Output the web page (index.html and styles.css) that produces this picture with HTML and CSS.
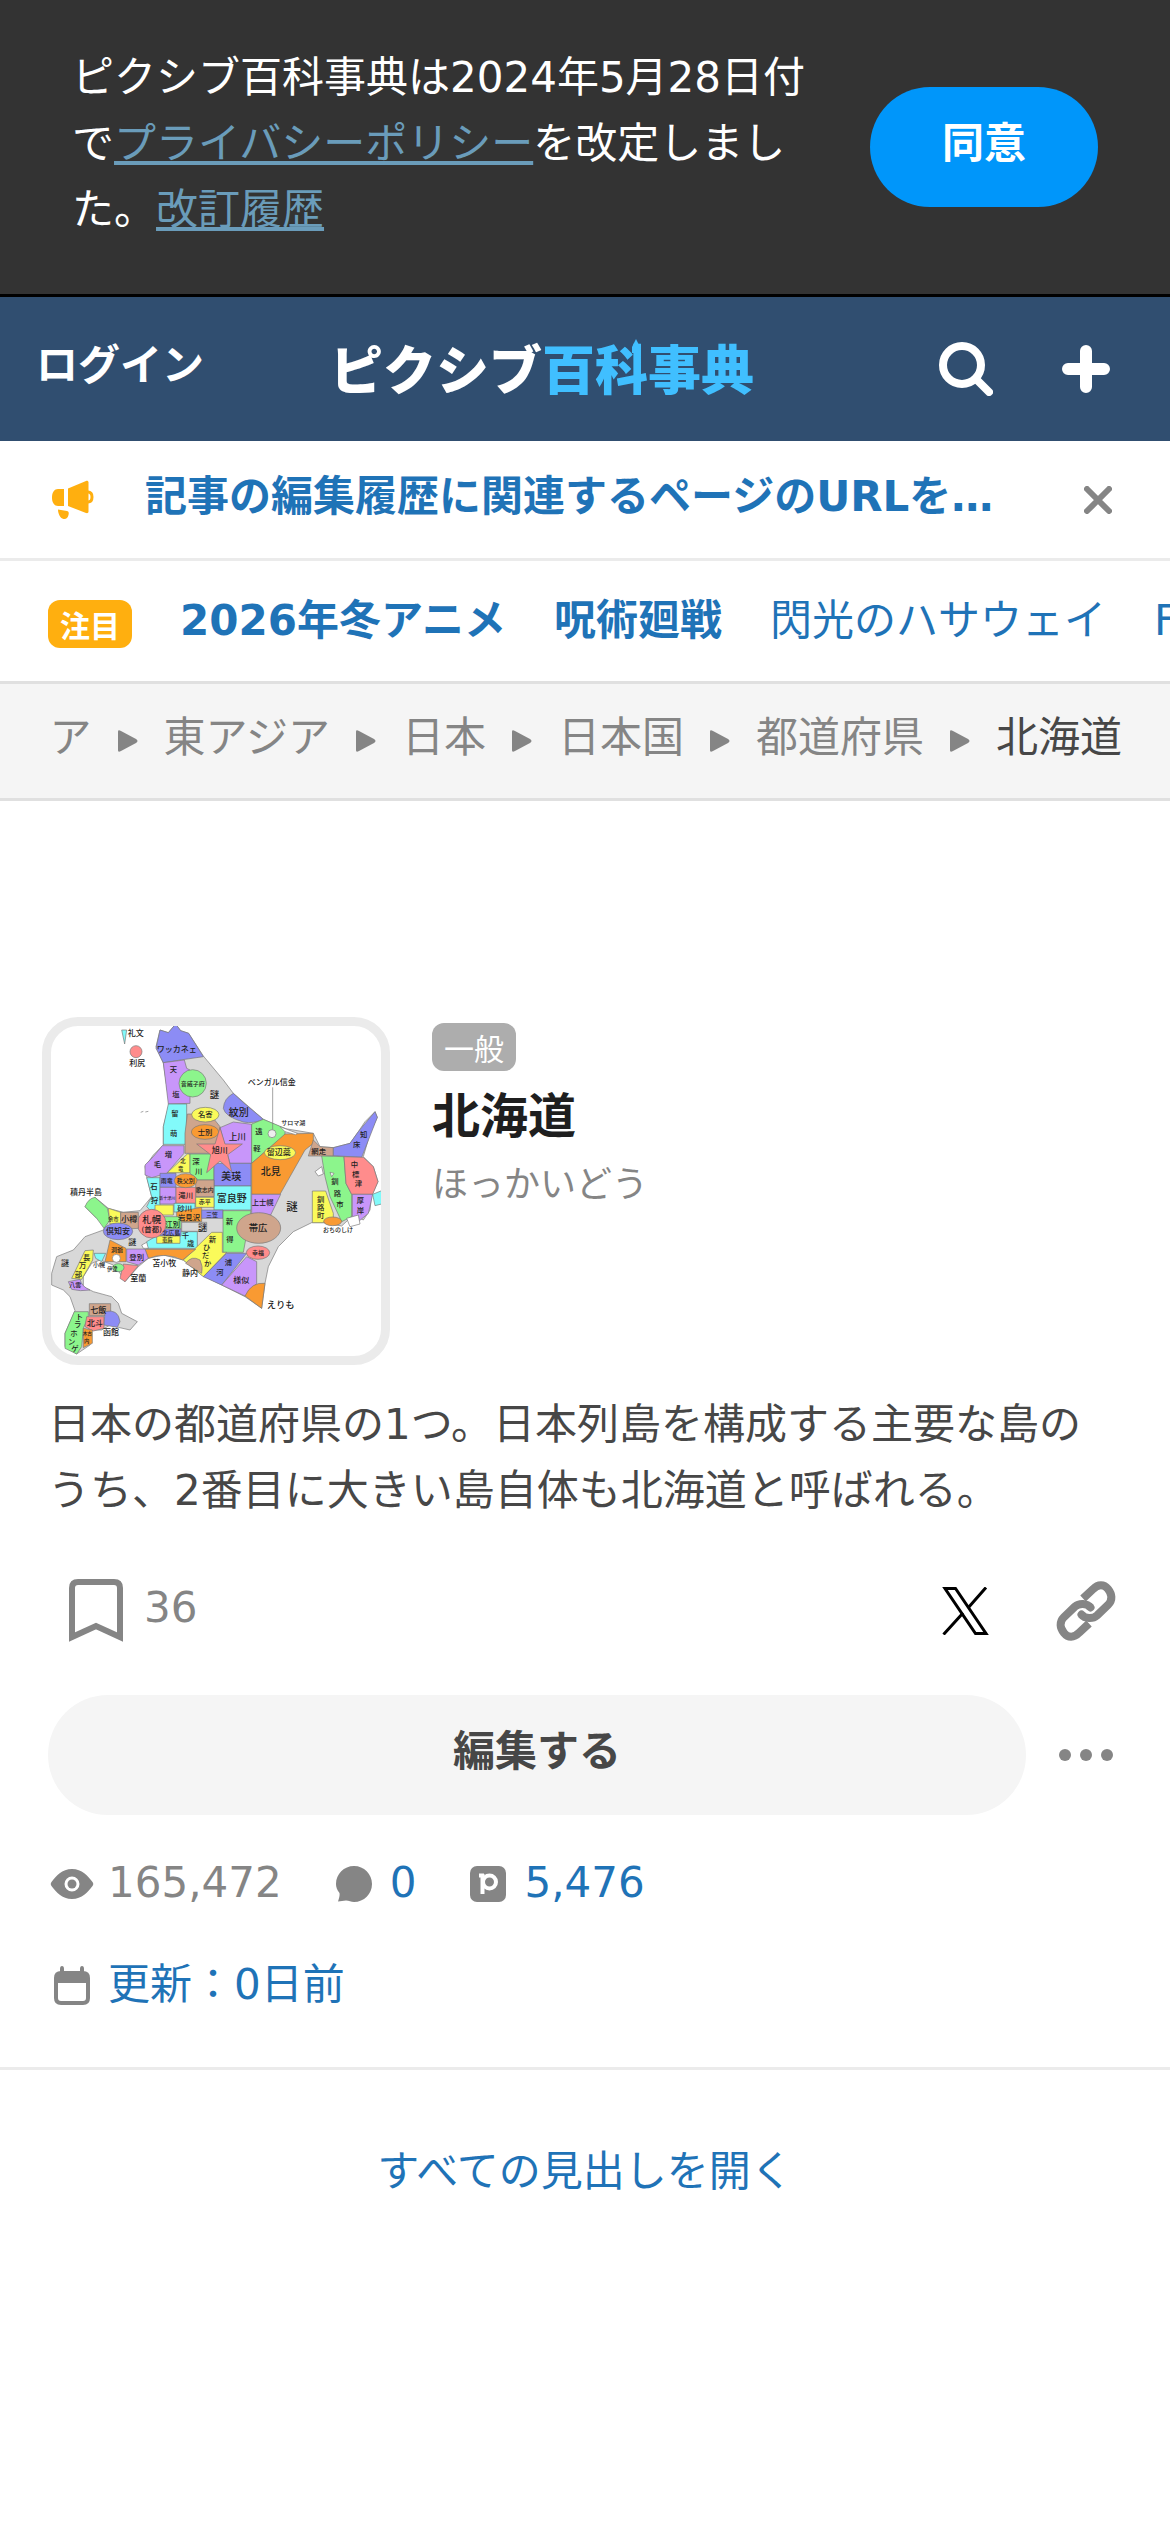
FILE: index.html
```
<!DOCTYPE html>
<html lang="ja">
<head>
    <meta charset="UTF-8">
    <meta name="viewport" content="width=device-width, initial-scale=1.0">
    <title>北海道 - ピクシブ百科事典</title>
    <link rel="stylesheet" href="styles.css">
</head>
<body>
    <!-- お知らせバナー -->
    <div class="policy">
        <p class="policy-text">ピクシブ百科事典は2024年5月28日付で<a href="#">プライバシーポリシー</a>を改定しました。<a href="#">改訂履歴</a></p>
        <button class="policy-agree" type="button">同意</button>
    </div>

    <!-- ヘッダー -->
    <header class="header">
        <a class="login" href="#">ログイン</a>
        <a class="logo" href="#">
            <span>ピクシブ</span><span class="logo-sub">百科事典</span>
            <svg class="logo-pencil" width="8" height="14" viewBox="0 0 8 14" fill="#40bfff"><path d="M4 0l4 8v6H0V8z"/></svg>
        </a>
        <div class="header-buttons">
            <button class="icon-button" type="button" aria-label="検索">
                <svg width="54" height="54" viewBox="0 0 54 54" fill="none" stroke="#fff" stroke-linecap="round">
                    <circle cx="23" cy="23" r="19" stroke-width="8"/>
                    <path d="M37 37l13 13" stroke-width="8"/>
                </svg>
            </button>
            <button class="icon-button" type="button" aria-label="記事を作成">
                <svg width="48" height="48" viewBox="0 0 48 48" stroke="#fff" stroke-width="12" stroke-linecap="round">
                    <path d="M24 6v36M6 24h36"/>
                </svg>
            </button>
        </div>
    </header>

    <!-- 運営からのお知らせ -->
    <div class="notice">
        <svg class="notice-icon" width="42" height="40" viewBox="0 0 42 40" fill="#ffaf0f">
            <path d="M12 9v17H6c-3.500 0-6-3-6-8.500S2.500 9 6 9z"/>
            <path d="M16 8.500L34 1c1.300-.5 2.500.2 2.500 1.500v29c0 1.300-1.200 2-2.500 1.500l-18-7z"/>
            <path d="M36 12c2.500 0 4 2 4 5s-1.500 5-4 5" fill="none" stroke="#ffaf0f" stroke-width="3"/>
            <path d="M6 29.500l9 1.500c2 .4 2 2 1.500 4-.7 3-2.500 4.500-5 4-3-.6-5.500-5-5.500-9.500z"/>
        </svg>
        <a class="notice-link" href="#">記事の編集履歴に関連するページのURLを…</a>
        <button class="icon-button" type="button" aria-label="閉じる">
            <svg width="28" height="28" viewBox="0 0 28 28" stroke="#858585" stroke-width="6" stroke-linecap="round">
                <path d="M3 3l22 22M25 3L3 25"/>
            </svg>
        </button>
    </div>

    <!-- 注目タグ -->
    <div class="pickup">
        <span class="label label-pickup">注目</span>
        <a class="strong" href="#">2026年冬アニメ</a>
        <a class="strong" href="#">呪術廻戦</a>
        <a href="#">閃光のハサウェイ</a>
        <a href="#">Fate</a>
    </div>

    <!-- パンくず -->
    <nav class="breadcrumb">
        <a href="#">ア</a>
        <svg class="arrow" viewBox="0 0 20 22"><path d="M0 2C0 0 1 0 3 1l15 8c2 1 2 3 0 4L3 21c-2 1-3 1-3-1z"/></svg>
        <a href="#">東アジア</a>
        <svg class="arrow" viewBox="0 0 20 22"><path d="M0 2C0 0 1 0 3 1l15 8c2 1 2 3 0 4L3 21c-2 1-3 1-3-1z"/></svg>
        <a href="#">日本</a>
        <svg class="arrow" viewBox="0 0 20 22"><path d="M0 2C0 0 1 0 3 1l15 8c2 1 2 3 0 4L3 21c-2 1-3 1-3-1z"/></svg>
        <a href="#">日本国</a>
        <svg class="arrow" viewBox="0 0 20 22"><path d="M0 2C0 0 1 0 3 1l15 8c2 1 2 3 0 4L3 21c-2 1-3 1-3-1z"/></svg>
        <a href="#">都道府県</a>
        <svg class="arrow" viewBox="0 0 20 22"><path d="M0 2C0 0 1 0 3 1l15 8c2 1 2 3 0 4L3 21c-2 1-3 1-3-1z"/></svg>
        <span class="current">北海道</span>
    </nav>

    <!-- 記事 -->
    <main class="article">
        <div class="article-head">
            <svg class="map" viewBox="63 78 990 990" role="img" aria-label="北海道の地図">
                <g stroke="#777" stroke-width="2">
                    <!-- 本島 -->
                    <path fill="#d8d8d8" d="M437 72L452 92 476 100 520 168 580 240 610 280 700 358 760 385 850 400 870 440 910 443 960 430 985 395 1005 365 1035 335 1042 352 1020 400 1000 470 1030 500 1044 545 1025 585 1020 630 1000 660 970 645 935 678 880 668 845 668 790 695 745 740 715 800 705 850 695 925 645 890 575 855 515 825 460 780 400 765 355 775 325 800 285 845 270 820 250 795 210 780 185 790 160 830 160 860 190 875 245 890 265 910 275 940 322 965 300 990 265 982 240 975 215 990 185 990 180 1035 140 1062 105 1040 105 1000 135 932 120 890 100 870 65 855 65 820 80 770 130 750 165 710 220 690 235 660 200 655 165 620 195 592 235 625 280 637 330 632 365 590 350 530 345 500 370 465 400 435 400 380 418 310 400 190 378 140 390 90 415 98z"/>
                    <!-- 北部 -->
                    <path fill="#8c8cf5" d="M437 72L452 92 476 100 520 170 465 178 400 188 378 145 390 90 415 98z"/>
                    <path fill="#c896fa" d="M400 188L463 180 470 205 480 210 480 310 415 312z"/>
                    <circle cx="488" cy="250" r="41" fill="#8cf58c"/>
                    <path fill="#82fafa" d="M415 312H470V433H400L400 380z"/>
                    <path fill="#8c8cf5" d="M610 280L645 312 700 358Q670 372 640 366 585 350 580 325 582 295 610 280z"/>
                    <path fill="#cfa58c" d="M472 342H540L570 380V460H465V400z"/>
                    <ellipse cx="526" cy="344" rx="41" ry="22" fill="#fafa5a"/>
                    <path fill="#c896fa" d="M570 383L610 366 665 373V490H600z"/>
                    <ellipse cx="525" cy="396" rx="41" ry="22" fill="#f99a32"/>
                    <path fill="#8cf58c" d="M665 372L700 358 765 385V405L665 490z"/>
                    <path fill="#f99a32" d="M765 402L850 400 850 430 825 450 750 583H665V490z"/>
                    <path fill="#fff" d="M750 380L802 400 797 404 765 395z"/>
                    <ellipse cx="750" cy="458" rx="47" ry="21" fill="#fafa5a"/>
                    <path fill="#cfa58c" d="M850 420L870 440 910 443V468H835z"/>
                    <path fill="#8c8cf5" d="M910 443L960 430 985 395 1035 335 1042 352 995 472 910 467z"/>
                    <path fill="#8cf58c" d="M875 468L942 470 948 550 965 583V650L935 665 900 590 885 530z"/>
                    <path fill="#ff8c8c" d="M942 470L1000 472 1030 500 1044 545 1028 583H965L948 550z"/>
                    <path fill="#c896fa" d="M967 583H1028L1015 640 985 665 967 655z"/>
                    <path fill="#82fafa" d="M1028 583L1055 572V612L1035 617z"/>
                    <path fill="#fafa5a" d="M847 573H887L910 640V660L880 668H847z"/>
                    <ellipse cx="908" cy="664" rx="27" ry="13" fill="#f99a32"/>
                    <!-- 中部 -->
                    <path fill="#c896fa" d="M397 437H462V460L410 520 365 533 345 525 345 495 370 470z"/>
                    <path fill="#fafa5a" d="M472 462H480V518H412z"/>
                    <path fill="#8cf58c" d="M480 462H552V540H505L480 520z"/>
                    <path fill="#8c8cf5" d="M552 490H663V558H552z"/>
                    <path fill="#82fafa" d="M552 558H663V630H552z"/>
                    <path fill="#c896fa" d="M665 583H752L722 645H665z"/>
                    <path fill="#82fafa" d="M350 533H390V625L360 630 350 620 365 590z"/>
                    <path fill="#8c8cf5" d="M390 520H438V562H390z"/>
                    <path fill="#c896fa" d="M390 562H438V612H390z"/>
                    <path fill="#cfa58c" d="M497 540H552V590H497z"/>
                    <path fill="#ff8c8c" d="M438 562H497V610H438z"/>
                    <path fill="#fafa5a" d="M497 592H552V622H497z"/>
                    <path fill="#82fafa" d="M432 610H495V636H432z"/>
                    <path fill="#f99a32" d="M440 636L515 622V665H440z"/>
                    <path fill="#8c8cf5" d="M515 630H579V655H515z"/>
                    <path fill="#fafa5a" d="M375 615H430V645H375z"/>
                    <ellipse cx="467" cy="542" rx="34" ry="21" fill="#f99a32"/>
                    <path fill="#8cf58c" d="M402 650H453V687H402z"/>
                    <path fill="#82fafa" d="M350 725L385 705 455 695H502V745H350z"/>
                    <path fill="#8c8cf5" d="M392 687H453V708H392z"/>
                    <path fill="#fafa5a" d="M380 708H450V730H380z"/>
                    <path fill="#d8d8d8" d="M455 667H530V694H455z"/>
                    <path fill="#8cf58c" d="M579 632H663L640 757H579z"/>
                    <path fill="#ff8c8c" d="M570 383L585 432H637L593 464 605 515 570 483 530 518 542 464 500 432H555z"/>
                    <!-- 南部 -->
                    <path fill="#fafa5a" d="M545 697H577V757H590L520 830 460 780z"/>
                    <path fill="#8c8cf5" d="M590 760H650L575 855 520 830z"/>
                    <path fill="#c896fa" d="M650 770L680 785V850L645 888 575 855z"/>
                    <path fill="#f99a32" d="M645 888Q665 845 705 850L695 925z"/>
                    <path fill="#cfa58c" d="M467 790Q485 765 510 780 520 800 515 820z"/>
                    <ellipse cx="686" cy="684" rx="66" ry="46" fill="#cfa58c"/>
                    <ellipse cx="684" cy="758" rx="35" ry="20" fill="#ff8c8c"/>
                    <path fill="#f99a32" d="M345 748H497L458 780Q405 755 355 775z"/>
                    <circle cx="365" cy="671" r="43" fill="#ff8c8c"/>
                    <path fill="#8cf58c" d="M165 620Q175 595 195 592L232 625 240 660 222 685 200 655z"/>
                    <path fill="#fafa5a" d="M235 625L272 637V672H240z"/>
                    <path fill="#cfa58c" d="M272 637H325V685L290 687 272 672z"/>
                    <ellipse cx="264" cy="694" rx="44" ry="25" fill="#8c8cf5"/>
                    <path fill="#f99a32" d="M240 720L288 745V785H225z"/>
                    <circle cx="259" cy="775" r="12" fill="#fff"/>
                    <path fill="#c896fa" d="M290 747H345L355 775 325 795 290 785z"/>
                    <path fill="#ff8c8c" d="M280 792L325 797 285 845 270 835z"/>
                    <ellipse cx="265" cy="803" rx="17" ry="12" fill="#8cf58c"/>
                    <path fill="#82fafa" d="M192 760H227L215 785 197 775z"/>
                    <path fill="#fafa5a" d="M165 752L190 750 188 780 155 838 125 835z"/>
                    <path fill="#c896fa" d="M115 845L150 838Q155 860 180 870 150 875 125 868z"/>
                    <path fill="#cfa58c" d="M178 911H242V947H178z"/>
                    <path fill="#8cf58c" d="M133 935H175V950L160 985 155 1040 140 1062 105 1045 105 1000z"/>
                    <path fill="#ff8c8c" d="M170 950H222V985L190 993 165 980z"/>
                    <path fill="#f99a32" d="M160 985L187 990V1030L160 1043z"/>
                    <path fill="#8c8cf5" d="M225 935Q265 925 270 965L262 982 222 975z"/>
                    <!-- 離島と湖 -->
                    <path fill="#82fafa" d="M275 90H290L284 132z"/>
                    <circle cx="318" cy="155" r="18" fill="#ff8c8c"/>
                    <circle cx="726" cy="401" r="12" fill="#eee"/>
                    <path fill="none" d="M728 262V388M332 337L340 334M346 336L355 334"/>
                    <path fill="#fff" d="M855 515L875 500 880 522 865 528zM900 517L912 520 905 530zM335 735L350 727 355 745 340 745zM950 655L985 645 990 672 960 680z"/>
                </g>
                <g class="map-text">
                    <text x="317" y="107" font-size="24">礼文</text>
                    <text x="322" y="198" font-size="24">利尻</text>
                    <text x="440" y="157" font-size="24">ワッカネェ</text>
                    <text x="430" y="217">天</text>
                    <text x="438" y="291">塩</text>
                    <text x="488" y="258" font-size="18">音威子府</text>
                    <text x="553" y="295" font-size="28">謎</text>
                    <text x="725" y="255" font-size="24">ベンガル信金</text>
                    <text x="790" y="374" font-size="18">サロマ湖</text>
                    <text x="626" y="348" font-size="30">紋別</text>
                    <text x="526" y="352">名寄</text>
                    <text x="525" y="404">士別</text>
                    <text x="435" y="348">留</text>
                    <text x="431" y="408">萌</text>
                    <text x="415" y="470">増</text>
                    <text x="382" y="502">毛</text>
                    <text x="622" y="419" font-size="26">上川</text>
                    <text x="569" y="460" font-size="24">旭川</text>
                    <text x="687" y="402">遠</text>
                    <text x="681" y="452">軽</text>
                    <text x="746" y="466" font-size="24">留辺蘂</text>
                    <text x="866" y="462">網走</text>
                    <text x="1001" y="410">知</text>
                    <text x="980" y="442">床</text>
                    <text x="973" y="502">中</text>
                    <text x="977" y="530">標</text>
                    <text x="985" y="557">津</text>
                    <text x="915" y="552">釧</text>
                    <text x="922" y="588">路</text>
                    <text x="930" y="620">市</text>
                    <text x="991" y="610">厚</text>
                    <text x="991" y="638">岸</text>
                    <text x="872" y="605">釧</text>
                    <text x="872" y="630">路</text>
                    <text x="872" y="654">町</text>
                    <text x="924" y="697" font-size="18">おちのしけ</text>
                    <text x="722" y="526" font-size="30">北見</text>
                    <text x="604" y="540" font-size="30">美瑛</text>
                    <text x="605" y="607" font-size="30">富良野</text>
                    <text x="698" y="614">上士幌</text>
                    <text x="786" y="632" font-size="34">謎</text>
                    <text x="498" y="492">深</text>
                    <text x="506" y="522">川</text>
                    <text x="459" y="490" font-size="16">北</text>
                    <text x="452" y="512" font-size="16">竜</text>
                    <text x="372" y="566">石</text>
                    <text x="373" y="610">狩</text>
                    <text x="467" y="549" font-size="18">秩父別</text>
                    <text x="410" y="550" font-size="18">雨竜</text>
                    <text x="412" y="600" font-size="12">新十津川</text>
                    <text x="467" y="594">滝川</text>
                    <text x="524" y="576" font-size="18">歌志内</text>
                    <text x="524" y="613" font-size="18">赤平</text>
                    <text x="464" y="632">砂川</text>
                    <text x="477" y="659">岩見沢</text>
                    <text x="546" y="650" font-size="18">三笠</text>
                    <text x="517" y="692" font-size="26">謎</text>
                    <text x="428" y="680">江別</text>
                    <text x="424" y="706" font-size="18">北広島</text>
                    <text x="412" y="726" font-size="16">恵庭</text>
                    <text x="466" y="714">千</text>
                    <text x="482" y="737">歳</text>
                    <text x="547" y="727">新</text>
                    <text x="530" y="750">ひ</text>
                    <text x="527" y="773">だ</text>
                    <text x="533" y="797">か</text>
                    <text x="598" y="672">新</text>
                    <text x="600" y="727">得</text>
                    <text x="684" y="693" font-size="28">帯広</text>
                    <text x="684" y="764" font-size="18">幸福</text>
                    <text x="595" y="794">浦</text>
                    <text x="570" y="826">河</text>
                    <text x="634" y="850" font-size="24">様似</text>
                    <text x="752" y="923" font-size="28">えりも</text>
                    <text x="480" y="829" font-size="24">静内</text>
                    <text x="403" y="799" font-size="24">苫小牧</text>
                    <text x="365" y="668" font-size="28">札幌</text>
                    <text x="365" y="697" font-size="22">(首都)</text>
                    <text x="298" y="666" font-size="24">小樽</text>
                    <text x="264" y="703" font-size="24">倶知安</text>
                    <text x="250" y="662" font-size="16">余市</text>
                    <text x="168" y="585" font-size="24">積丹半島</text>
                    <text x="307" y="734" font-size="24">謎</text>
                    <text x="105" y="799" font-size="24">謎</text>
                    <text x="261" y="755" font-size="18">洞爺</text>
                    <text x="320" y="780">登別</text>
                    <text x="207" y="800" font-size="18">小幌</text>
                    <text x="247" y="812" font-size="16">伊達</text>
                    <text x="325" y="843" font-size="24">室蘭</text>
                    <text x="170" y="779">長</text>
                    <text x="158" y="805">万</text>
                    <text x="145" y="830">部</text>
                    <text x="136" y="861" font-size="18">八雲</text>
                    <text x="205" y="938" font-size="24">七飯</text>
                    <text x="195" y="977" font-size="24">北斗</text>
                    <text x="243" y="1004" font-size="24">函館</text>
                    <text x="148" y="957">ト</text>
                    <text x="143" y="982">ラ</text>
                    <text x="132" y="1007">ホ</text>
                    <text x="125" y="1032">ン</text>
                    <text x="135" y="1052">ゲ</text>
                    <text x="172" y="1005" font-size="14">木古</text>
                    <text x="170" y="1028" font-size="16">内</text>
                </g>
            </svg>
            <div class="article-title">
                <span class="label label-general">一般</span>
                <h1>北海道</h1>
                <p class="kana">ほっかいどう</p>
            </div>
        </div>

        <p class="summary">日本の都道府県の1つ。日本列島を構成する主要な島のうち、2番目に大きい島自体も北海道と呼ばれる。</p>

        <div class="actions">
            <button class="bookmark" type="button">
                <svg width="54" height="64" viewBox="0 0 54 64" fill="none" stroke="#858585" stroke-width="6">
                    <path d="M3 58V9q0-6 6-6h36q6 0 6 6v49L27 47z"/>
                </svg>
                <span>36</span>
            </button>
            <a class="share" href="#" aria-label="Xでシェア">
                <svg width="48" height="48" viewBox="0 0 48 48" fill="none" stroke="#000">
                    <path d="M3 1.500h10.500L44 46.500H33.500z" stroke-width="3"/>
                    <path d="M1.500 47.500L21 26M26 21L44 .5" stroke-width="3"/>
                </svg>
            </a>
            <button class="icon-button" type="button" aria-label="リンクをコピー">
                <svg width="60" height="60" viewBox="0 0 60 60" fill="none" stroke="#858585" stroke-width="8">
                    <path d="M27 17.500L37 8.200C42 3 48 3 52 8S57 19 52 24L41 34.500C37 38 29 38 25.500 33.500"/>
                    <path d="M25.500 33.500l.1.100M34.500 26.500l-.1-.1" stroke-linecap="round"/>
                    <path d="M33 42.500L23 51.800C18 57 12 57 8 52S3 41 8 36L19 25.500C23 22 31 22 34.500 26.500"/>
                </svg>
            </button>
        </div>

        <div class="edit">
            <button class="edit-button" type="button">編集する</button>
            <button class="icon-button" type="button" aria-label="メニュー">
                <svg width="54" height="12" viewBox="0 0 54 12" fill="#858585">
                    <circle cx="6" cy="6" r="6"/>
                    <circle cx="27" cy="6" r="6"/>
                    <circle cx="48" cy="6" r="6"/>
                </svg>
            </button>
        </div>

        <ul class="stats">
            <li>
                <svg class="stat-icon" viewBox="0 0 48 48">
                    <path fill="#858585" fill-rule="evenodd" d="M24 9c10 0 16 7 20.500 13 1 1.300 1 2.700 0 4C40 32 34 39 24 39S8 32 3.500 26c-1-1.300-1-2.700 0-4C8 16 14 9 24 9zm0 7.500a7.500 7.500 0 100 15 7.500 7.500 0 000-15z"/>
                    <circle cx="24" cy="24" r="4.500" fill="#858585"/>
                </svg>
                <span>165,472</span>
            </li>
            <li>
                <svg class="stat-icon" viewBox="0 0 48 48">
                    <path fill="#858585" d="M24 6c10 0 18 8 18 18s-8 18-18 18c-3 0-5-1.500-8-1.500-3 0-5 .8-8 1 1-3 2-6 1.500-8.500C7 30 6 27 6 24 6 14 14 6 24 6z"/>
                </svg>
                <a href="#">0</a>
            </li>
            <li>
                <svg class="stat-icon" viewBox="0 0 48 48">
                    <rect x="6" y="6" width="36" height="36" rx="7" fill="#858585"/>
                    <path d="M18.500 14v20M15 15.500h5" fill="none" stroke="#fff" stroke-width="4"/>
                    <circle cx="25.500" cy="22" r="6.500" fill="none" stroke="#fff" stroke-width="4"/>
                </svg>
                <a href="#">5,476</a>
            </li>
            <li>
                <svg class="stat-icon" viewBox="0 0 48 48" fill="#858585">
                    <path fill-rule="evenodd" d="M13 9h22q7 0 7 7v20q0 7-7 7H13q-7 0-7-7V16q0-7 7-7zm-3 12v15q0 3 3 3h22q3 0 3-3V21z"/>
                    <path d="M12 7q0-3 2-3t2 3v5h-4zM32 7q0-3 2-3t2 3v5h-4z"/>
                </svg>
                <a href="#">更新：0日前</a>
            </li>
        </ul>
    </main>

    <div class="open-all">
        <button type="button">すべての見出しを開く</button>
    </div>
</body>
</html>
```
FILE: styles.css
```
/* 全体 */
* {
    box-sizing: border-box;
}

body {
    margin: 0;
    font-family: "DejaVu Sans", "Noto Sans CJK JP", sans-serif;
    font-size: 42px;
    line-height: 66px;
    color: #474747;
    background-color: #fff;
}

h1, p, ul {
    margin: 0;
    padding: 0;
}

a {
    color: #1f73b7;
    text-decoration: none;
}

svg {
    display: block;
    flex-shrink: 0;
}

button {
    font: inherit;
    color: inherit;
    background: none;
    border: none;
    padding: 0;
    cursor: pointer;
}

/* お知らせバナー */
.policy {
    display: flex;
    justify-content: space-between;
    align-items: center;
    gap: 64px;
    padding: 45px 72px;
    color: #fff;
    background-color: #333;
    border-bottom: 3px solid #000;
}

.policy-text {
    flex: 1;
    padding-bottom: 6px;
}

.policy-text a {
    color: #6a9cba;
    text-decoration: underline;
}

.policy-agree {
    width: 228px;
    height: 120px;
    padding-bottom: 6px;
    border-radius: 60px;
    font-weight: bold;
    color: #fff;
    background-color: #0096fa;
}

/* ヘッダー */
.header {
    display: flex;
    align-items: center;
    height: 144px;
    padding: 0 60px 0 36px;
    background-color: #304e70;
}

.login {
    padding-bottom: 6px;
    font-weight: bold;
    color: #fff;
}

.logo {
    position: relative;
    margin-left: 126px;
    padding-top: 6px;
    font-size: 53px;
    font-weight: 900;
    color: #fff;
}

.logo-sub {
    color: #40bfff;
}

/* 「科」の上に出る鉛筆の先 */
.logo-pencil {
    position: absolute;
    top: 6px;
    left: 302px;
}

.header-buttons {
    display: flex;
    align-items: center;
    gap: 69px;
    margin-left: auto;
}

/* 運営からのお知らせ */
.notice {
    display: flex;
    align-items: center;
    height: 120px;
    padding: 0 58px 0 52px;
    border-bottom: 3px solid #ebebeb;
}

.notice-link {
    flex: 1;
    margin-left: 51px;
    padding-bottom: 6px;
    font-weight: bold;
}

/* 注目タグ */
.pickup {
    display: flex;
    align-items: center;
    gap: 48px;
    height: 120px;
    padding-left: 48px;
    white-space: nowrap;
    overflow: hidden;
}

.strong {
    font-weight: bold;
}

.label {
    flex-shrink: 0;
    padding: 6px 12px 0;
    border-radius: 12px;
    font-size: 30px;
    line-height: 42px;
    color: #fff;
}

.label-pickup {
    margin-top: 6px;
    font-weight: bold;
    background-color: #ffaf0f;
}

.label-general {
    background-color: #adadad;
}

/* パンくず */
.breadcrumb {
    display: flex;
    justify-content: flex-end;
    align-items: center;
    height: 120px;
    padding: 0 48px;
    white-space: nowrap;
    background-color: #f5f5f5;
    border-top: 3px solid #e0e0e0;
    border-bottom: 3px solid #e0e0e0;
}

.breadcrumb a,
.current {
    padding-bottom: 6px;
}

.breadcrumb a {
    color: #858585;
}

.arrow {
    width: 20px;
    height: 22px;
    margin: 0 26px;
    fill: #858585;
}

/* 記事 */
.article {
    padding: 216px 48px 48px;
    border-bottom: 3px solid #ebebeb;
}

.article-head {
    display: flex;
    gap: 42px;
    margin-left: -6px;
}

.map {
    width: 348px;
    height: 348px;
    border: 9px solid #ebebeb;
    border-radius: 36px;
}

.map-text {
    font-size: 22px;
    font-weight: 500;
    fill: #222;
    text-anchor: middle;
}

.article-title {
    display: flex;
    flex-direction: column;
    align-items: flex-start;
    padding-top: 6px;
}

.article-title h1 {
    margin: 9px 0 3px;
    font-size: 48px;
    line-height: 72px;
    color: #1f1f1f;
}

.kana {
    font-size: 36px;
    line-height: 60px;
    color: #858585;
}

.summary {
    margin-top: 27px;
}

/* ブックマークと共有 */
.actions {
    display: flex;
    align-items: center;
    margin-top: 51px;
    padding: 0 6px 0 21px;
}

.bookmark {
    display: flex;
    align-items: center;
    gap: 21px;
    margin-right: auto;
    color: #858585;
}

.bookmark span {
    padding-bottom: 6px;
}

.share {
    margin-right: 66px;
}

/* 編集ボタン */
.edit {
    display: flex;
    align-items: center;
    gap: 33px;
    margin-top: 48px;
    padding-right: 9px;
}

.edit-button {
    flex: 1;
    height: 120px;
    padding-bottom: 6px;
    border-radius: 60px;
    font-weight: bold;
    background-color: #f5f5f5;
}

/* 閲覧数など */
.stats {
    display: flex;
    flex-wrap: wrap;
    gap: 36px 48px;
    margin-top: 36px;
    list-style: none;
    line-height: 63px;
    color: #858585;
}

.stats li {
    display: flex;
    align-items: center;
    gap: 12px;
}

.stats li:last-child {
    width: 100%;
}

.stats a,
.stats span {
    padding-bottom: 3px;
}

.stat-icon {
    width: 48px;
    height: 48px;
}

.open-all {
    display: flex;
    justify-content: center;
    padding: 69px 0;
    color: #1f73b7;
}
```
